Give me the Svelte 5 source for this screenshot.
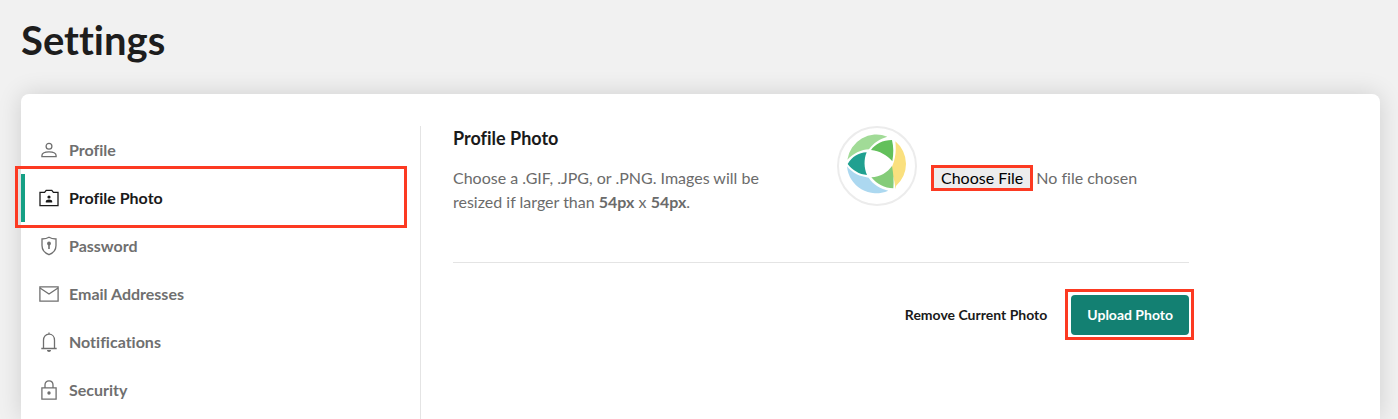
<script>
	let active = 'Profile Photo';

	const items = [
		{ label: 'Profile', icon: 'user' },
		{ label: 'Profile Photo', icon: 'camera' },
		{ label: 'Password', icon: 'shield' },
		{ label: 'Email Addresses', icon: 'mail' },
		{ label: 'Notifications', icon: 'bell' },
		{ label: 'Security', icon: 'lock' }
	];
</script>

<div class="page">
	<h1>Settings</h1>

	<div class="card">
		<nav class="sidebar">
			{#each items as item}
				<a
					href="#{item.icon}"
					class="nav-item"
					class:active={item.label === active}
					on:click|preventDefault={() => (active = item.label)}
				>
					<svg class="icon" viewBox="0 0 20 20" aria-hidden="true">
						{#if item.icon === 'user'}
							<circle cx="10" cy="6.2" r="2.9" />
							<path d="M2.9 16.6h14.2v-.8c0-2.3-3-3.9-7.1-3.9s-7.1 1.6-7.1 3.9z" />
						{:else if item.icon === 'camera'}
							<path d="M1 4.3h4.6l1.6-2h5.6l1.6 2H19v13.3H1z" />
							<circle class="solid" cx="10" cy="9" r="1.6" />
							<path class="solid" d="M6.8 14.4v-1c0-1.1 1.6-1.8 3.2-1.8s3.2.7 3.2 1.8v1z" />
						{:else if item.icon === 'shield'}
							<path d="M10 1.3c2 1.3 4.5 1.7 7 1.7v6.5c0 4.3-2.9 7.6-7 9.2-4.1-1.6-7-4.9-7-9.2V3c2.5 0 5-.4 7-1.7z" />
							<circle class="solid" cx="10" cy="7.5" r="1.9" />
							<path d="M10 8v5" stroke-width="1.6" />
						{:else if item.icon === 'mail'}
							<path d="M.9 2.9h18.2v14.2H.9z" />
							<path d="M1 4l9 6 9-6" />
						{:else if item.icon === 'bell'}
							<path d="M2.3 16.5h15.4M4.5 16.3V8.2c0-3.4 2.2-6 5.5-6s5.5 2.6 5.5 6v8.1M10 .6v1.6" />
							<path class="solid" d="M8 18h4c0 1.2-.8 2-2 2s-2-.8-2-2z" />
						{:else}
							<path d="M2.9 7.9h14.2v11.2H2.9zM6 7.8V5c0-2.5 1.6-4.2 4-4.2S14 2.5 14 5v2.8" />
							<circle class="solid" cx="10" cy="13" r="1.7" />
						{/if}
					</svg>
					{item.label}
				</a>
			{/each}
		</nav>

		<main>
			<div class="photo-row">
				<div class="info">
					<h2>Profile Photo</h2>
					<p>
						Choose a .GIF, .JPG, or .PNG. Images will be resized if larger than
						<strong>54px</strong> x <strong>54px</strong>.
					</p>
				</div>
				<div class="picker">
					<svg class="avatar" viewBox="15 18 240 240" role="img" aria-label="Current photo">
						<circle cx="135" cy="138" r="117" fill="#fff" stroke="#ececec" stroke-width="6" />
						<path fill="#a1db97" d="M46 119A88 88 0 0 1 166 50C143 57 125 68 111 88C88 89 66 99 46 119z" />
						<path fill="#62c05b" d="M117 90C130 72 152 60 180 60C185 81 185 101 181 124C165 105 143 93 117 90z" />
						<path fill="#fae07e" d="M190 64A88 88 0 0 1 192 198L190 208C189 192 187 176 180 161L180 140C191 116 193 91 190 64z" />
						<path fill="#20a090" d="M47 132C61 110 79 98 104 97C95 119 96 143 105 165C82 163 61 151 47 132z" />
						<path fill="#84cc79" d="M118 172C145 170 166 158 180 138C184 160 186 182 184 205C157 204 136 193 118 172z" />
						<path fill="#acd8f0" d="M45 139C62 160 84 170 110 173C124 194 143 205 169 212A88 88 0 0 1 45 139z" />
					</svg>
					<input type="file" aria-label="Choose a profile photo" accept=".gif,.jpg,.png" />
				</div>
			</div>

			<div class="actions">
				<button class="remove">Remove Current Photo</button>
				<button class="upload">Upload Photo</button>
			</div>
		</main>
	</div>
</div>

<style>
	:global(body) {
		margin: 0;
		background: #f1f1f1;
	}
	.page {
		box-sizing: border-box;
		min-height: 100vh;
		display: flex;
		flex-direction: column;
		padding: 16px 18px 0 21px;
		overflow: hidden;
		font-family: Lato, 'Open Sans', sans-serif;
		font-size: 16px;
		line-height: 24px;
		font-variant-ligatures: none;
		color: #6b6b6b;
	}
	h1 {
		margin: 0 0 30px;
		font-size: 40px;
		line-height: 48px;
		font-weight: 700;
		color: #1d1d1d;
	}
	.card {
		flex: 1;
		display: flex;
		padding-top: 32px;
		background: #fff;
		border-radius: 8px 8px 0 0;
		box-shadow: 0 0 24px rgba(0, 0, 0, 0.14);
	}
	.sidebar {
		box-sizing: border-box;
		width: 400px;
		flex-shrink: 0;
		border-right: 1px solid #e4e4e4;
	}
	.nav-item {
		position: relative;
		display: flex;
		align-items: center;
		gap: 10px;
		height: 48px;
		padding-left: 18px;
		font-weight: 700;
		color: #6f6f6f;
		text-decoration: none;
	}
	.nav-item.active {
		padding-left: 14px;
		border-left: 4px solid #16a085;
		color: #1a1a1a;
	}
	.nav-item.active::after {
		content: '';
		position: absolute;
		inset: -8px 13px -6px -10px;
		border: 3px solid #fc3a22;
	}
	.icon {
		width: 20px;
		height: 20px;
		fill: none;
		stroke: currentColor;
		stroke-width: 1.3;
	}
	.solid {
		fill: currentColor;
		stroke: none;
	}
	main {
		flex: 1;
		max-width: 736px;
		padding: 0 32px;
	}
	.photo-row {
		display: grid;
		grid-template-columns: minmax(0, 1fr) minmax(0, 1fr);
		gap: 32px;
		padding-bottom: 48px;
		border-bottom: 1px solid #e4e4e4;
	}
	h2 {
		margin: 0 0 16px;
		font-size: 18px;
		line-height: 24px;
		font-weight: 700;
		color: #1a1a1a;
	}
	.info p {
		margin: 0;
		max-width: 320px;
	}
	.picker {
		display: flex;
		align-items: flex-start;
		gap: 14px;
	}
	.avatar {
		flex-shrink: 0;
		width: 80px;
		height: 80px;
	}
	input {
		flex: 1;
		min-width: 0;
		margin-top: 39px;
		font: inherit;
		color: #6b6b6b;
	}
	input::file-selector-button {
		height: 26px;
		margin: 0 3px 0 0;
		padding: 0 7px;
		border: 3px solid #fc3a22;
		background: #ededed;
		font: inherit;
		line-height: 20px;
		color: #000;
	}
	.actions {
		display: flex;
		justify-content: flex-end;
		gap: 8px;
		padding-top: 32px;
	}
	button {
		height: 40px;
		padding: 0 16px;
		border: 0;
		border-radius: 4px;
		background: none;
		font: inherit;
		font-size: 14px;
		font-weight: 700;
		color: #1a1a1a;
		cursor: pointer;
	}
	.upload {
		position: relative;
		background: #138072;
		color: #fff;
	}
	.upload::after {
		content: '';
		position: absolute;
		inset: -6px -5px -5px -6px;
		border: 3px solid #fc3a22;
	}
</style>
